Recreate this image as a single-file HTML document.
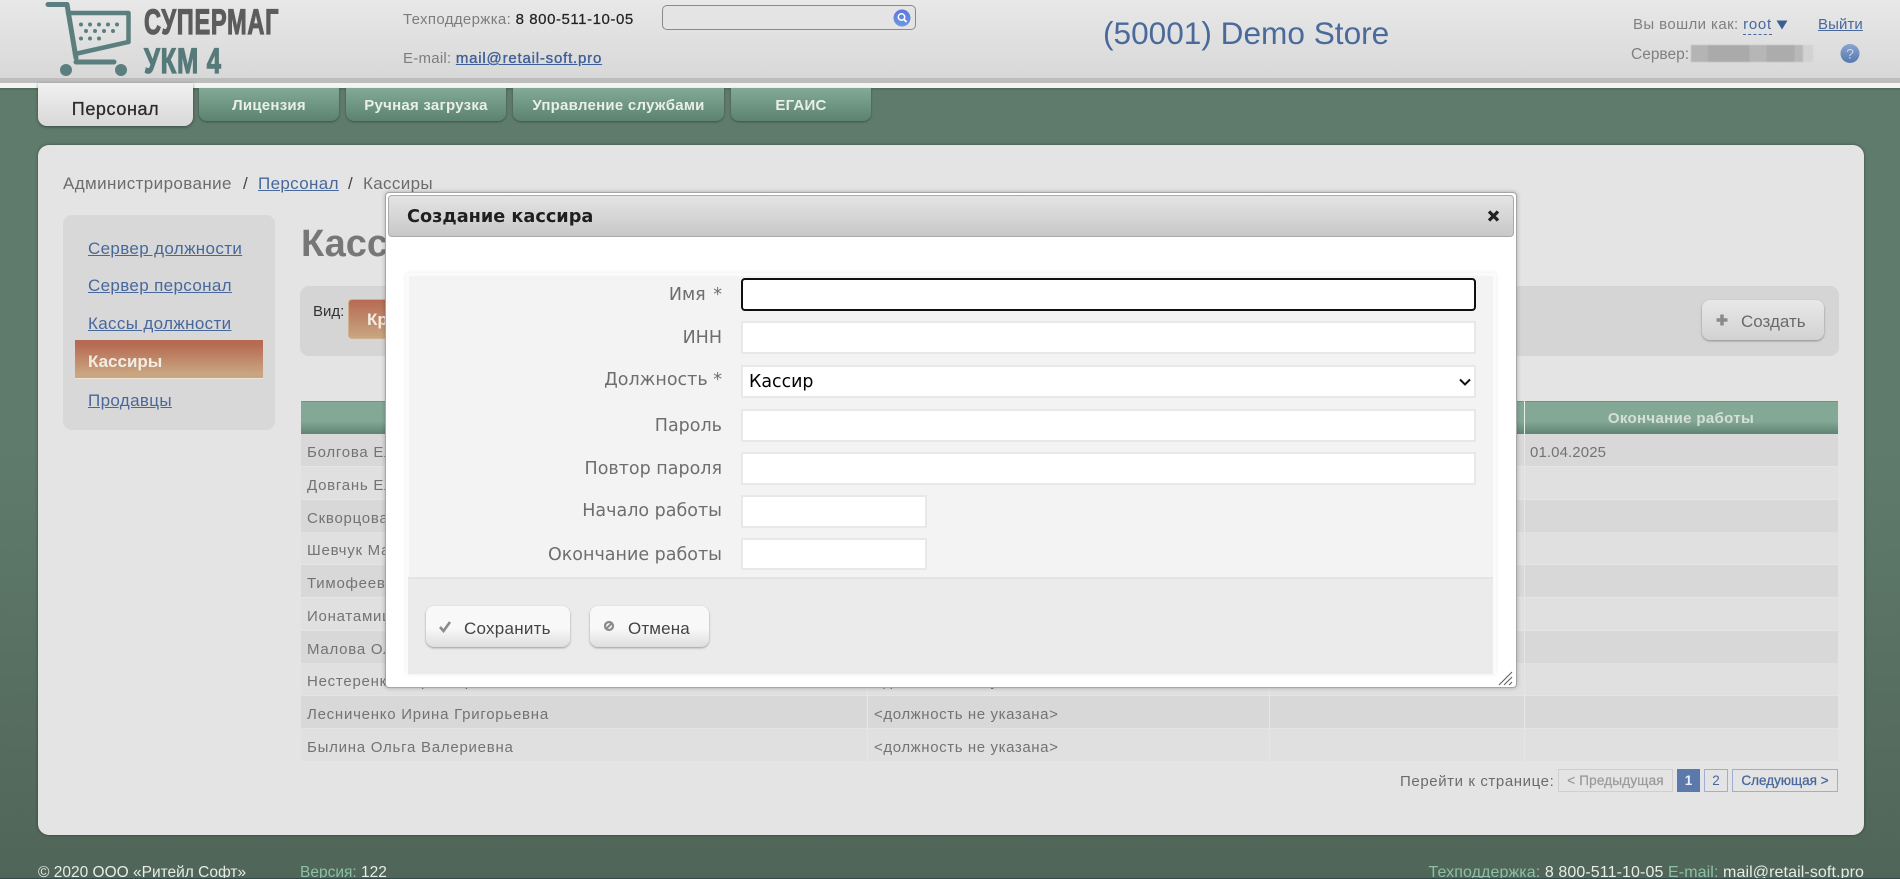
<!DOCTYPE html>
<html lang="ru"><head><meta charset="utf-8"><title>Создание кассира</title>
<style>
*{box-sizing:border-box}
html,body{margin:0;padding:0;width:1900px;height:879px;overflow:hidden}
body{position:relative;background:linear-gradient(#5f7b6b 0,#5f7b6b 450px,#506558 879px);font:15px "Liberation Sans",sans-serif;color:#6f6f6f}
a{color:#48689c;text-decoration:underline}
.a{position:absolute}
.t{position:absolute;white-space:nowrap}
.tab{position:absolute;top:88px;height:33px;border-radius:0 0 8px 8px;background:linear-gradient(#82aa96,#5c8370);color:#e9efe9;font-weight:bold;font-size:15px;letter-spacing:.25px;text-align:center;line-height:36px;box-shadow:0 1px 2px rgba(0,0,0,.35)}
.row{position:absolute;left:301px;width:1537px;height:32px}
.row i{position:absolute;top:0;bottom:0;width:1px;background:#e6e6e6}
.row span{position:absolute;top:0;line-height:38px;white-space:nowrap;font-size:15px;color:#737373;letter-spacing:.75px}
.row span.p{letter-spacing:.6px}
.lab{position:absolute;right:1178px;white-space:nowrap;font:17.5px "DejaVu Sans",sans-serif;color:#6e6e6e;line-height:20px}
.inp{position:absolute;background:#fff;border:2px solid #e8e8e8;left:741px;width:735px;height:33px}
.btn{position:absolute;border-radius:8px;background:linear-gradient(#f8f8f8 55%,#dedede);box-shadow:0 1px 2px rgba(0,0,0,.35);height:41px;color:#444;font-size:17px;line-height:40px}
.pg{position:absolute;top:769px;height:23px;border:1px solid #9fadce;color:#48689c;font-size:13.5px;line-height:22px;text-align:center;white-space:nowrap}
.side{position:absolute;left:88px;font-size:17px;line-height:22px;white-space:nowrap;letter-spacing:.35px}
</style></head><body>

<!-- header -->
<div class="a" style="left:0;top:0;width:1900px;height:78px;background:linear-gradient(#e8e8e8,#d8d8d8)"></div>
<div class="a" style="left:0;top:78px;width:1900px;height:5px;background:#bdbdbd"></div>
<div class="a" style="left:0;top:83px;width:1900px;height:5px;background:#f4f4f4"></div>
<div class="a" style="left:0;top:88px;width:1900px;height:3px;background:linear-gradient(#4f6a5b,#5f7b6b)"></div>

<svg class="a" style="left:0;top:0" width="150" height="80" viewBox="0 0 150 80">
<g fill="none" stroke="#5a7f7e" stroke-linecap="round" stroke-linejoin="round">
<path d="M48 4.500H67L76 58" stroke-width="5"/>
<path d="M68 13H128.500V42L75 54" stroke-width="4.500"/>
<path d="M76 62H114" stroke-width="5"/>
</g>
<g fill="#5a7f7e"><circle cx="66" cy="70" r="6"/><circle cx="121" cy="70" r="6"/>
<circle cx="81" cy="24.500" r="2"/><circle cx="90" cy="24.500" r="2"/><circle cx="99" cy="24.500" r="2"/><circle cx="108" cy="24.500" r="2"/><circle cx="117" cy="24.500" r="2"/>
<circle cx="86" cy="31" r="2"/><circle cx="95" cy="31" r="2"/><circle cx="104" cy="31" r="2"/><circle cx="113" cy="31" r="2"/>
<circle cx="81" cy="38.500" r="2"/><circle cx="90" cy="38.500" r="2"/><circle cx="99" cy="38.500" r="2"/></g>
</svg>
<div class="t" style="left:144px;top:4px;font:bold 35px/37px 'Liberation Sans',sans-serif;color:#5c5c5c;transform:scaleX(.675);transform-origin:0 0;-webkit-text-stroke:1.2px #5c5c5c;letter-spacing:1px">СУПЕРМАГ</div>
<div class="t" style="left:144px;top:43px;font:bold 35px/37px 'Liberation Sans',sans-serif;color:#56797a;transform:scaleX(.73);transform-origin:0 0;-webkit-text-stroke:1.2px #56797a;letter-spacing:1px">УКМ 4</div>

<div class="t" style="left:403px;top:11px;font-size:15px;line-height:18px;letter-spacing:.35px;color:#7d7d7d">Техподдержка: <span style="color:#222;-webkit-text-stroke:.2px #222;letter-spacing:.55px">8 800-511-10-05</span></div>
<div class="t" style="left:403px;top:50px;font-size:15px;line-height:18px;letter-spacing:.25px;color:#7d7d7d">E-mail: <a href="#" style="color:#3f5f97;-webkit-text-stroke:.35px #3f5f97;letter-spacing:.8px">mail@retail-soft.pro</a></div>
<div class="a" style="left:662px;top:5px;width:254px;height:25px;border:1px solid #8a8a8a;border-radius:5px;background:#e4e4e4"></div>
<svg class="a" style="left:893px;top:9px" width="18" height="18" viewBox="0 0 18 18"><defs><linearGradient id="g" x1="0" y1="0" x2="0" y2="1"><stop offset="0" stop-color="#5a78d8"/><stop offset="1" stop-color="#6c98e4"/></linearGradient></defs><circle cx="9" cy="9" r="8.500" fill="url(#g)"/><circle cx="8.500" cy="8" r="3.200" fill="none" stroke="#fff" stroke-width="1.500"/><path d="M11 10.500L13.500 13" stroke="#fff" stroke-width="1.800"/></svg>

<div class="t" style="left:1103px;top:12px;font-size:31.600px;line-height:42px;color:#4a6a9c">(50001) Demo Store</div>
<div class="t" style="left:1633px;top:16px;font-size:15px;line-height:18px;letter-spacing:.4px;color:#808080">Вы вошли как: <span style="color:#48689c;border-bottom:1px dashed #48689c;padding-bottom:1px;letter-spacing:.7px">root</span></div>
<svg class="a" style="left:1776px;top:20px" width="12" height="10" viewBox="0 0 12 10"><path d="M0.500 0.500H11.500L6 9.500Z" fill="#3d5f96"/></svg>
<a class="t" href="#" style="left:1818px;top:16px;font-size:15px;line-height:18px;letter-spacing:.1px">Выйти</a>
<div class="t" style="left:1631px;top:46px;font-size:15.500px;line-height:18px;color:#808080">Сервер:</div>
<div class="a" style="left:1691px;top:45px;width:122px;height:17px;background:linear-gradient(90deg,#b4b4b4 0 14%,#aaa 14% 48%,#b6b6b6 48% 62%,#acacac 62% 85%,#b8b8b8 85% 92%,#d2d2d2 92%);filter:blur(.4px)"></div>
<svg class="a" style="left:1840px;top:43px" width="20" height="21" viewBox="0 0 20 21"><defs><linearGradient id="h" x1="0" y1="0" x2="0" y2="1"><stop offset="0" stop-color="#8ba5cf"/><stop offset="1" stop-color="#5578b0"/></linearGradient></defs><circle cx="10" cy="10.500" r="9.500" fill="url(#h)"/><text x="10" y="15.500" text-anchor="middle" font-family="Liberation Sans" font-size="14" fill="#c9d6ea">?</text></svg>

<!-- tabs -->
<div class="a" style="left:38px;top:83px;width:155px;height:43px;border-radius:0 0 9px 9px;background:linear-gradient(#f1f1f1,#d8d8d8);box-shadow:0 1px 3px rgba(0,0,0,.4);text-align:center;font-size:18px;letter-spacing:.6px;-webkit-text-stroke:.3px #2b2b2b;line-height:53px;color:#2b2b2b">Персонал</div>
<div class="tab" style="left:199px;width:140px">Лицензия</div>
<div class="tab" style="left:346px;width:160px">Ручная загрузка</div>
<div class="tab" style="left:513px;width:211px">Управление службами</div>
<div class="tab" style="left:731px;width:140px">ЕГАИС</div>

<!-- main panel -->
<div class="a" style="left:38px;top:145px;width:1826px;height:690px;background:#e4e4e4;border-radius:11px;box-shadow:0 0 3px rgba(0,0,0,.35)"></div>
<div class="t" style="left:63px;top:173px;font-size:17px;line-height:22px;letter-spacing:.4px;color:#6c6c6c">Администрирование</div>
<div class="t" style="left:243px;top:173px;font-size:17px;line-height:22px;color:#444">/</div>
<a class="t" href="#" style="left:258px;top:173px;font-size:17px;line-height:22px;letter-spacing:.35px">Персонал</a>
<div class="t" style="left:348px;top:173px;font-size:17px;line-height:22px;color:#444">/</div>
<div class="t" style="left:363px;top:173px;font-size:17px;line-height:22px;letter-spacing:.35px;color:#6c6c6c">Кассиры</div>

<!-- sidebar -->
<div class="a" style="left:63px;top:215px;width:212px;height:215px;background:#d8d8d8;border-radius:9px"></div>
<a class="side" href="#" style="top:238px">Сервер должности</a>
<a class="side" href="#" style="top:275px">Сервер персонал</a>
<a class="side" href="#" style="top:313px">Кассы должности</a>
<div class="a" style="left:75px;top:340px;width:188px;height:39px;background:linear-gradient(#b66a51 10%,#c9a682 90%);border-bottom:1px solid #f0e4d8"></div>
<div class="side" style="top:351px;color:#f3ece2;font-weight:bold;letter-spacing:0">Кассиры</div>
<a class="side" href="#" style="top:390px">Продавцы</a>

<div class="t" style="left:301px;top:221px;font:bold 38px/46px 'Liberation Sans',sans-serif;color:#777">Кассиры</div>

<!-- toolbar -->
<div class="a" style="left:300px;top:286px;width:1539px;height:70px;background:#d5d5d5;border-radius:9px"></div>
<div class="t" style="left:313px;top:302px;font-size:15px;line-height:20px;color:#333">Вид:</div>
<div class="a" style="left:348px;top:299px;width:120px;height:40px;border-radius:4px;border:1px solid #d0b08e;background:linear-gradient(#b66a51,#c9a682);color:#f3ece2;font-weight:bold;font-size:17px;line-height:40px;padding-left:18px">Кратко</div>
<div class="a" style="left:1702px;top:300px;width:122px;height:40px;border-radius:8px;background:linear-gradient(#e8e8e8,#d2d2d2);box-shadow:0 1px 2px rgba(0,0,0,.35)"></div>
<svg class="a" style="left:1716px;top:314px" width="12" height="12" viewBox="0 0 12 12"><path d="M6 0.500V11.500M0.500 6H11.500" stroke="#8a8a8a" stroke-width="3.500"/></svg>
<div class="t" style="left:1741px;top:310px;font-size:17px;line-height:24px;color:#6a6a6a">Создать</div>

<!-- table -->
<div class="a" style="left:301px;top:401px;width:1537px;height:33px;background:linear-gradient(#83a996 60%,#5f8572);border-top:1px solid #6d9582"></div>
<div class="a" style="left:1524px;top:401px;width:1px;height:33px;background:#e8eee9"></div>
<div class="t" style="left:1524px;width:314px;top:401px;line-height:35px;font-size:15px;font-weight:bold;letter-spacing:.35px;color:#d5dfd8;text-align:center">Окончание работы</div>

<div class="row" style="top:434px;background:#d8d8d8"><span style="left:6px">Болгова Елена</span><span style="left:1229px;letter-spacing:.1px">01.04.2025</span><i style="left:566px"></i><i style="left:968px"></i><i style="left:1223px"></i></div>
<div class="row" style="top:467px;background:#e0e0e0"><span style="left:6px">Довгань Елена</span><i style="left:1223px"></i></div>
<div class="row" style="top:500px;background:#d8d8d8"><span style="left:6px">Скворцова</span><i style="left:1223px"></i></div>
<div class="row" style="top:532px;background:#e0e0e0"><span style="left:6px">Шевчук Мария</span><i style="left:1223px"></i></div>
<div class="row" style="top:565px;background:#d8d8d8"><span style="left:6px">Тимофеева</span><i style="left:1223px"></i></div>
<div class="row" style="top:598px;background:#e0e0e0"><span style="left:6px">Ионатамишвили</span><i style="left:1223px"></i></div>
<div class="row" style="top:631px;background:#d8d8d8"><span style="left:6px">Малова Ольга</span><i style="left:1223px"></i></div>
<div class="row" style="top:663px;background:#e0e0e0"><span style="left:6px">Нестеренко Вера Сергеевна</span><span class="p" style="left:573px">&lt;должность не указана&gt;</span><i style="left:566px"></i><i style="left:968px"></i><i style="left:1223px"></i></div>
<div class="row" style="top:696px;background:#d8d8d8"><span style="left:6px">Лесниченко Ирина Григорьевна</span><span class="p" style="left:573px">&lt;должность не указана&gt;</span><i style="left:566px"></i><i style="left:968px"></i><i style="left:1223px"></i></div>
<div class="row" style="top:729px;background:#e0e0e0"><span style="left:6px">Былина Ольга Валериевна</span><span class="p" style="left:573px">&lt;должность не указана&gt;</span><i style="left:566px"></i><i style="left:968px"></i><i style="left:1223px"></i></div>

<!-- pagination -->
<div class="t" style="left:1400px;top:772px;font-size:15px;line-height:20px;letter-spacing:.6px;color:#6c6c6c">Перейти к странице:</div>
<div class="pg" style="left:1558px;width:115px;border-color:#cfcfcf;color:#9b9b9b;-webkit-text-stroke:.25px #9b9b9b;letter-spacing:.2px">&lt; Предыдущая</div>
<div class="pg" style="left:1677px;width:23px;background:#5b79ab;border-color:#5b79ab;color:#eef;font-weight:bold">1</div>
<div class="pg" style="left:1704px;width:24px">2</div>
<div class="pg" style="left:1732px;width:106px;-webkit-text-stroke:.3px #48689c">Следующая &gt;</div>

<!-- footer -->
<div class="t" style="left:38px;top:863px;font-size:15.500px;line-height:20px;color:#e8ece8">© 2020 ООО «Ритейл Софт»</div>
<div class="t" style="left:300px;top:863px;font-size:15.500px;line-height:20px;color:#8cc0a6">Версия: <span style="color:#e8ece8">122</span></div>
<div class="t" style="right:36px;top:863px;font-size:16px;line-height:20px;letter-spacing:.1px;color:#8cc0a6">Техподдержка: <span style="color:#e8ece8">8 800-511-10-05</span> E-mail: <span style="color:#e8ece8">mail@retail-soft.pro</span></div>
<div class="a" style="left:0;top:878px;width:1900px;height:1px;background:#2f4a48"></div>

<!-- dialog -->
<div class="a" style="left:385px;top:192px;width:1132px;height:496px;background:#fff;border:1px solid #a6a6a6;border-radius:4px;box-shadow:0 0 4px rgba(0,0,0,.25)"></div>
<div class="a" style="left:388px;top:195px;width:1126px;height:42px;border:1px solid #aaa;border-radius:4px;background:linear-gradient(#e4e4e4,#c8c8c8)"></div>
<div class="t" style="left:407px;top:205px;font:bold 17.700px/24px 'DejaVu Sans',sans-serif;color:#1f1f1f">Создание кассира</div>
<svg class="a" style="left:1487px;top:209px" width="13" height="14" viewBox="0 0 13 14"><path d="M2 2.500L11 11.500M11 2.500L2 11.500" stroke="#222" stroke-width="3.300"/></svg>

<div class="a" style="left:406px;top:273px;width:1090px;height:401px;background:#f3f3f3;border:3px solid #fbfbfb;border-bottom:0;box-shadow:0 0 4px rgba(0,0,0,.08)"></div>
<div class="a" style="left:408px;top:577px;width:1085px;height:97px;background:#ebebeb;border-top:2px solid #e4e4e4"></div>

<div class="lab" style="top:285px;word-spacing:2px">Имя *</div>
<div class="lab" style="top:328px">ИНН</div>
<div class="lab" style="top:370px">Должность *</div>
<div class="lab" style="top:416px">Пароль</div>
<div class="lab" style="top:459px">Повтор пароля</div>
<div class="lab" style="top:501px">Начало работы</div>
<div class="lab" style="top:545px">Окончание работы</div>

<div class="inp" style="top:278px;height:33px;border:2px solid #101010;border-radius:4px"></div>
<div class="inp" style="top:321px"></div>
<select class="a" style="left:741px;top:365px;width:735px;height:33px;border:2px solid #e8e8e8;background:#fff;font:17.400px 'DejaVu Sans',sans-serif;color:#000;padding-left:6px;border-radius:0;appearance:none;-webkit-appearance:none;outline:0"><option>Кассир</option></select>
<svg class="a" style="left:1459px;top:378px" width="12" height="8" viewBox="0 0 12 8"><path d="M1 1.500L6 6.500L11 1.500" fill="none" stroke="#111" stroke-width="2"/></svg>
<div class="inp" style="top:409px"></div>
<div class="inp" style="top:452px"></div>
<div class="inp" style="top:495px;width:186px"></div>
<div class="inp" style="top:538px;width:186px;height:32px"></div>

<div class="btn" style="left:426px;top:606px;width:144px"></div>
<svg class="a" style="left:438px;top:620px" width="14" height="13" viewBox="0 0 14 13"><path d="M2 7L5.500 11L12 2" fill="none" stroke="#8a8a8a" stroke-width="2.600"/></svg>
<div class="t" style="left:464px;top:617px;font-size:17px;line-height:24px;letter-spacing:.25px;color:#444">Сохранить</div>
<div class="btn" style="left:590px;top:606px;width:119px"></div>
<svg class="a" style="left:603px;top:620px" width="12" height="12" viewBox="0 0 12 12"><circle cx="6" cy="6" r="4" fill="none" stroke="#8a8a8a" stroke-width="2.200"/><path d="M3.500 8.500L8.500 3.500" stroke="#8a8a8a" stroke-width="2"/></svg>
<div class="t" style="left:628px;top:617px;font-size:17px;line-height:24px;letter-spacing:.15px;color:#444">Отмена</div>

<svg class="a" style="left:1498px;top:670px" width="16" height="16" viewBox="0 0 16 16"><path d="M1 15L14 2M6 15L14 7M11 15L14 12" stroke="#666" stroke-width="1.200"/></svg>

</body></html>
